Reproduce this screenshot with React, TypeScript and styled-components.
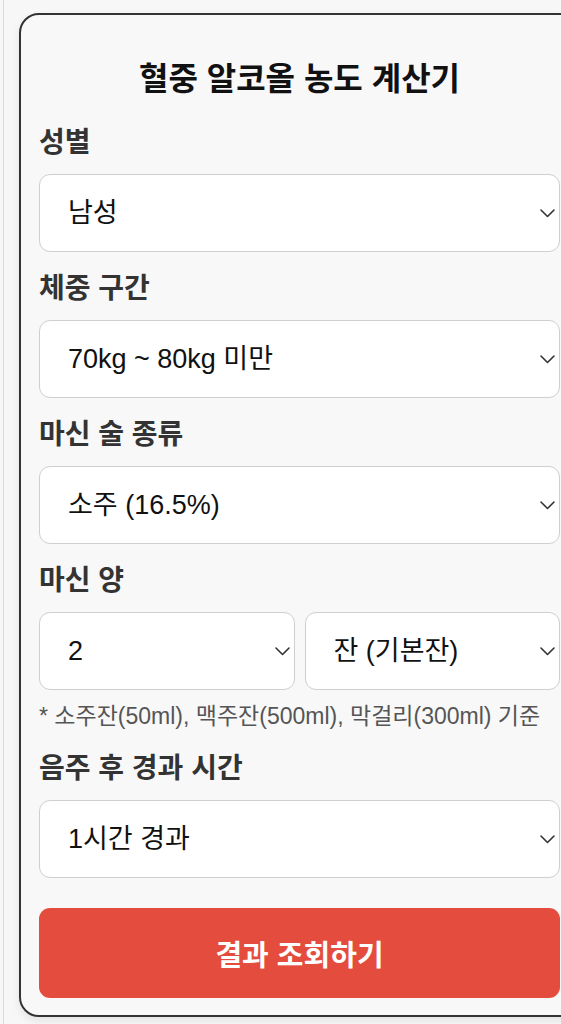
import React from "react";
import styled, { createGlobalStyle } from "styled-components";

const GlobalStyle = createGlobalStyle`
  html, body {
    margin: 0;
    padding: 0;
    overflow: hidden;
    background: #f7f7f7;
  }
  * {
    box-sizing: border-box;
  }
`;

const Page = styled.div`
  height: 100vh;
  margin-left: 3px;
  padding: 13px 0 0 15px;
  border-left: 1px solid #dcdcdc;
  overflow: hidden;
  font-family: "Liberation Sans", "Noto Sans CJK KR", sans-serif;
`;

const Card = styled.div`
  width: 561px;
  padding: 46px 18px 17px;
  background: #f8f8f8;
  border: 2px solid #333;
  border-radius: 20px;
  box-shadow: 0 4px 8px rgba(0, 0, 0, 0.08);
`;

const Title = styled.h1`
  margin: 0 0 29px;
  font-size: 32px;
  line-height: 36px;
  font-weight: 700;
  text-align: center;
  color: #111;
`;

const Field = styled.div<{ $last?: boolean }>`
  display: flex;
  flex-direction: column;
  margin-bottom: ${(p) => (p.$last ? "30px" : "20px")};
`;

const Label = styled.label`
  display: block;
  margin-bottom: 14px;
  font-size: 28px;
  line-height: 34px;
  font-weight: 700;
  color: #333;
`;

const Row = styled.div`
  display: grid;
  grid-template-columns: 1fr 1fr;
  gap: 10px;
`;

const SelectWrap = styled.div`
  position: relative;
`;

const Select = styled.select`
  display: block;
  width: 100%;
  height: 78px;
  padding: 0 30px 0 28px;
  appearance: none;
  -webkit-appearance: none;
  background: #fff;
  border: 1.5px solid #cfcfcf;
  border-radius: 11px;
  font-family: inherit;
  font-size: 27px;
  color: #111;
  outline: none;
`;

const Chevron = styled.svg`
  position: absolute;
  top: 50%;
  right: 5px;
  width: 15px;
  height: 9px;
  margin-top: -4px;
  pointer-events: none;
`;

const Note = styled.p`
  margin: 12px 0 2px;
  font-size: 23px;
  line-height: 28px;
  color: #555;
`;

const SubmitButton = styled.button`
  display: block;
  width: 100%;
  height: 90px;
  border: none;
  border-radius: 11px;
  background: #e44d3d;
  color: #fff;
  font-family: inherit;
  font-size: 29px;
  font-weight: 700;
  cursor: pointer;
`;

type Option = { value: string; label: string };

const DropDown = ({ options, value }: { options: Option[]; value: string }) => (
  <SelectWrap>
    <Select defaultValue={value}>
      {options.map((o) => (
        <option key={o.value} value={o.value}>
          {o.label}
        </option>
      ))}
    </Select>
    <Chevron viewBox="0 0 15 9" fill="none">
      <polyline
        points="1,1 7.5,7.5 14,1"
        stroke="#333"
        strokeWidth="1.6"
        strokeLinecap="round"
        strokeLinejoin="round"
      />
    </Chevron>
  </SelectWrap>
);

const genders = [
  { value: "male", label: "남성" },
  { value: "female", label: "여성" },
];

const weights = [
  { value: "50", label: "50kg 미만" },
  { value: "60", label: "50kg ~ 60kg 미만" },
  { value: "70", label: "60kg ~ 70kg 미만" },
  { value: "80", label: "70kg ~ 80kg 미만" },
  { value: "90", label: "80kg 이상" },
];

const drinks = [
  { value: "soju", label: "소주 (16.5%)" },
  { value: "beer", label: "맥주 (4.5%)" },
  { value: "makgeolli", label: "막걸리 (6%)" },
];

const counts = Array.from({ length: 10 }, (_, i) => ({
  value: String(i + 1),
  label: String(i + 1),
}));

const units = [
  { value: "glass", label: "잔 (기본잔)" },
  { value: "bottle", label: "병" },
];

const hours = Array.from({ length: 12 }, (_, i) => ({
  value: String(i + 1),
  label: `${i + 1}시간 경과`,
}));

export default function App() {
  return (
    <>
      <GlobalStyle />
      <Page>
        <Card>
          <Title>혈중 알코올 농도 계산기</Title>

          <Field>
            <Label>성별</Label>
            <DropDown options={genders} value="male" />
          </Field>

          <Field>
            <Label>체중 구간</Label>
            <DropDown options={weights} value="80" />
          </Field>

          <Field>
            <Label>마신 술 종류</Label>
            <DropDown options={drinks} value="soju" />
          </Field>

          <Field>
            <Label>마신 양</Label>
            <Row>
              <DropDown options={counts} value="2" />
              <DropDown options={units} value="glass" />
            </Row>
            <Note>* 소주잔(50ml), 맥주잔(500ml), 막걸리(300ml) 기준</Note>
          </Field>

          <Field $last>
            <Label>음주 후 경과 시간</Label>
            <DropDown options={hours} value="1" />
          </Field>

          <SubmitButton type="button">결과 조회하기</SubmitButton>
        </Card>
      </Page>
    </>
  );
}
